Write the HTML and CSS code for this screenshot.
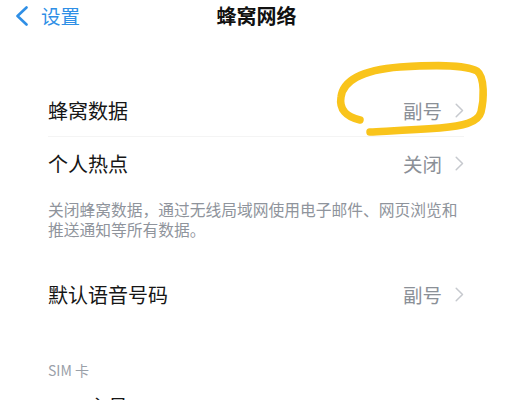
FILE: index.html
```html
<!DOCTYPE html>
<html lang="zh">
<head>
<meta charset="utf-8">
<link rel="stylesheet" href="styles.css">
</head>
<body>
<div class="page">
  <header class="navbar">
    <div class="back">
      <svg class="back-icon" width="14" height="20" viewBox="0 0 14 20"><path d="M11.5 1.5 L2.5 10 L11.5 18.5" fill="none" stroke="#2f8fe6" stroke-width="2.6" stroke-linecap="round" stroke-linejoin="round"/></svg>
      <span class="back-text">设置</span>
    </div>
    <div class="title">蜂窝网络</div>
    <div></div>
  </header>

  <section class="group first-group">
    <div class="row sep">
      <span class="label">蜂窝数据</span>
      <span class="value">副号<svg class="chev" width="9" height="15" viewBox="0 0 9 15"><path d="M1.2 1.2 L7.5 7.5 L1.2 13.8" fill="none" stroke="#c6c9ce" stroke-width="1.5" stroke-linecap="round" stroke-linejoin="round"/></svg></span>
    </div>
    <div class="row">
      <span class="label">个人热点</span>
      <span class="value">关闭<svg class="chev" width="9" height="15" viewBox="0 0 9 15"><path d="M1.2 1.2 L7.5 7.5 L1.2 13.8" fill="none" stroke="#c6c9ce" stroke-width="1.5" stroke-linecap="round" stroke-linejoin="round"/></svg></span>
    </div>
  </section>
  <p class="note">关闭蜂窝数据，通过无线局域网使用电子邮件、网页浏览和推送通知等所有数据。</p>

  <section class="group voice-group">
    <div class="row">
      <span class="label">默认语音号码</span>
      <span class="value">副号<svg class="chev" width="9" height="15" viewBox="0 0 9 15"><path d="M1.2 1.2 L7.5 7.5 L1.2 13.8" fill="none" stroke="#c6c9ce" stroke-width="1.5" stroke-linecap="round" stroke-linejoin="round"/></svg></span>
    </div>
  </section>

  <div class="section-head">SIM 卡</div>
  <section class="group">
    <div class="row">
      <span class="label indent">主号</span>
    </div>
  </section>

  <svg class="scribble" width="513" height="400" viewBox="0 0 513 400">
    <path d="M360 120 C346 117 339 109 341 97 C343 82 360 70 400 67 C432 65 464 64 477 71 C485 77 484 100 481 112 C478 123 462 126 440 128 C412 130 388 131 370 132" fill="none" stroke="#f9c41b" stroke-width="7.5" stroke-linecap="round" stroke-linejoin="round"/>
  </svg>
</div>
</body>
</html>
```

FILE: styles.css
```css
* { box-sizing: border-box; }
html, body { margin: 0; padding: 0; background: #ffffff; }
body {
  font-family: "Noto Sans CJK SC", "Noto Sans", sans-serif;
  color: #161616;
}
.page {
  position: relative;
  width: 513px;
  height: 400px;
  overflow: hidden;
}
.navbar {
  display: grid;
  grid-template-columns: 1fr auto 1fr;
  align-items: center;
  height: 32px;
}
.back {
  display: flex;
  align-items: center;
  padding-left: 15px;
  gap: 12px;
}
.back-icon { display: block; }
.back-text {
  font-size: 19.5px;
  color: #2f8fe6;
  line-height: 32px;
}
.title {
  font-size: 20px;
  font-weight: 700;
  line-height: 32px;
  color: #111111;
}
.group {
  padding: 0 49px 0 48px;
}
.first-group { margin-top: 53px; }
.row {
  display: flex;
  align-items: center;
  justify-content: space-between;
  height: 52px;
}
.sep { border-bottom: 1px solid #f4f4f4; }
.label {
  font-size: 20px;
  color: #161616;
}
.indent { padding-left: 40px; }
.value {
  display: flex;
  align-items: center;
  font-size: 19.5px;
  color: #8b9097;
}
.chev {
  display: block;
  margin-left: 13px;
}
.note {
  margin: 11px 0 0 0;
  padding: 0 40px 0 48px;
  font-size: 15.75px;
  line-height: 20px;
  color: #8f949c;
}
.voice-group { margin-top: 28px; }
.section-head {
  margin-top: 40px;
  padding-left: 48px;
  font-size: 14px;
  line-height: 20px;
  color: #9aa0a8;
}
.scribble {
  position: absolute;
  left: 0;
  top: 0;
  pointer-events: none;
}
```
